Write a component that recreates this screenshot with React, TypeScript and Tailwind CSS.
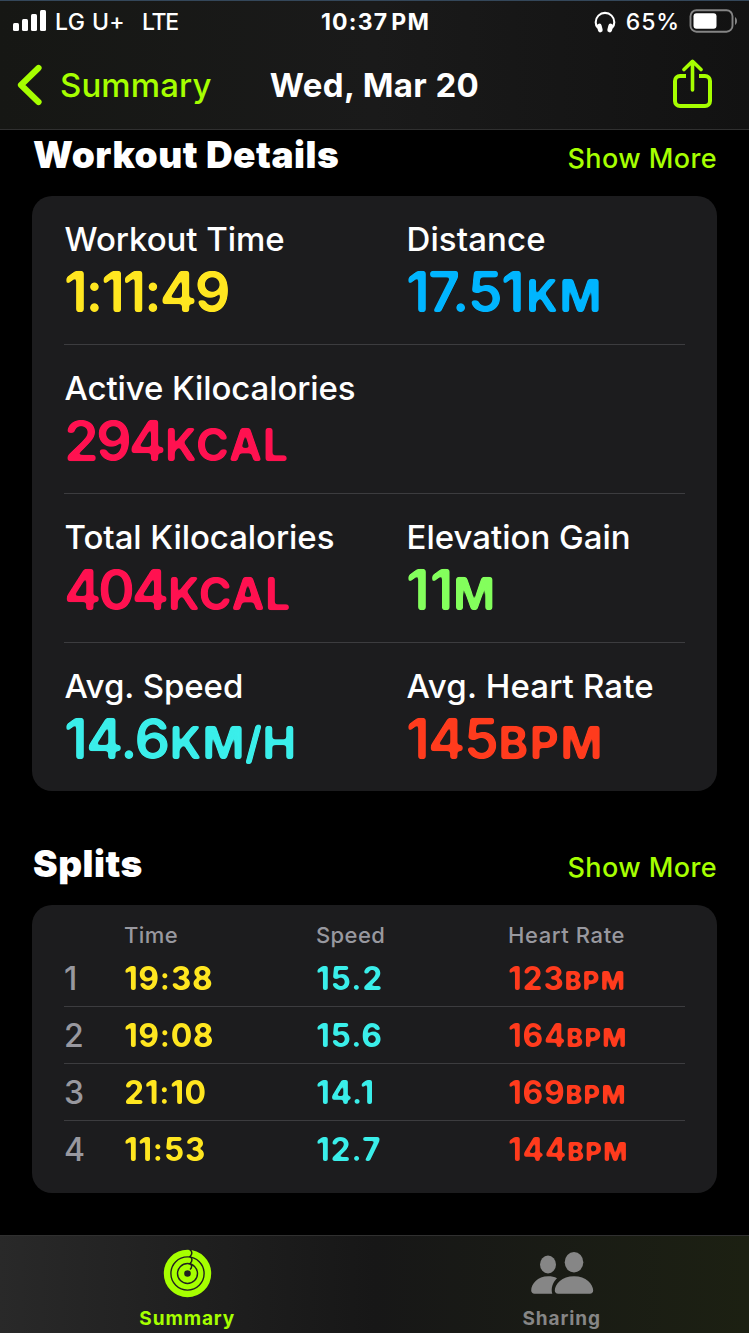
import { ReactNode } from "react";
import clsx from "clsx";

interface Metric {
  label: string;
  value: string;
  unit?: string;
  color: string;
  tracking: string;
  labelTracking: string;
  unitTracking?: string;
}

interface Split {
  time: string;
  speed: string;
  heartRate: string;
}

const metricRows: Metric[][] = [
  [
    { label: "Workout Time", value: "1:11:49", color: "text-[#ffe620]", tracking: "tracking-[-2.2px]", labelTracking: "tracking-[-0.05px]" },
    { label: "Distance", value: "17.51", unit: "KM", color: "text-[#00b5ff]", tracking: "tracking-[-1.6px]", labelTracking: "tracking-[0.1px]", unitTracking: "ml-[3px] tracking-[1px]" },
  ],
  [
    { label: "Active Kilocalories", value: "294", unit: "KCAL", color: "text-[#ff1150]", tracking: "tracking-[-3px]", labelTracking: "tracking-[-0.1px]", unitTracking: "ml-0.5 tracking-[0.5px]" },
  ],
  [
    { label: "Total Kilocalories", value: "404", unit: "KCAL", color: "text-[#ff1150]", tracking: "tracking-[-3.2px]", labelTracking: "tracking-[-0.05px]", unitTracking: "ml-0.5 tracking-[0.3px]" },
    { label: "Elevation Gain", value: "11", unit: "M", color: "text-[#83ff5c]", tracking: "tracking-[0px]", labelTracking: "tracking-[0px]" },
  ],
  [
    { label: "Avg. Speed", value: "14.6", unit: "KM/H", color: "text-[#3aeeea]", tracking: "tracking-[-1.6px]", labelTracking: "tracking-[-0.05px]", unitTracking: "ml-px tracking-[0.3px]" },
    { label: "Avg. Heart Rate", value: "145", unit: "BPM", color: "text-[#ff3b1d]", tracking: "tracking-[-1.6px]", labelTracking: "tracking-[0.15px]", unitTracking: "ml-px tracking-[1.6px]" },
  ],
];

const splits: Split[] = [
  { time: "19:38", speed: "15.2", heartRate: "123" },
  { time: "19:08", speed: "15.6", heartRate: "164" },
  { time: "21:10", speed: "14.1", heartRate: "169" },
  { time: "11:53", speed: "12.7", heartRate: "144" },
];

// Softens the corners of the numerals so they read as a rounded typeface
function RoundedFilters() {
  return (
    <svg width="0" height="0" className="absolute" aria-hidden="true">
      <filter id="round-lg" colorInterpolationFilters="sRGB" x="-5%" y="-10%" width="110%" height="120%">
        <feGaussianBlur stdDeviation="1.6" />
        <feColorMatrix values="1 0 0 0 0  0 1 0 0 0  0 0 1 0 0  0 0 0 4.5 -1.6" />
      </filter>
      <filter id="round-sm" colorInterpolationFilters="sRGB" x="-5%" y="-10%" width="110%" height="120%">
        <feGaussianBlur stdDeviation="1" />
        <feColorMatrix values="1 0 0 0 0  0 1 0 0 0  0 0 1 0 0  0 0 0 3.2 -1.1" />
      </filter>
    </svg>
  );
}

function StatusBar() {
  return (
    <div className="flex h-[42px] items-center pl-[13px] pr-[11px] text-[23px] leading-[42px] font-medium">
      <div className="flex w-[265px] items-center">
        <svg width="34" height="22" viewBox="0 0 34 22" fill="#fff" className="mr-2 mb-0.5">
          <rect x="0" y="13" width="6" height="8" rx="1.5" />
          <rect x="9" y="9" width="6" height="12" rx="1.5" />
          <rect x="18" y="4" width="6" height="17" rx="1.5" />
          <rect x="27" y="0" width="6" height="21" rx="1.5" />
        </svg>
        <span className="tracking-[0.4px]">LG U+</span>
        <span className="ml-[17px] tracking-[-1.3px]">LTE</span>
      </div>
      <div className="flex-1 text-center font-bold tracking-[1.2px]">10:37<span className="ml-[3px]">PM</span></div>
      <div className="flex w-[265px] items-center justify-end">
        <svg width="22" height="22" viewBox="0 0 22 22" fill="none" className="mr-2.5">
          <path d="M4 17C2.300 15.500 1.700 13.400 1.700 11.200a9.300 9.300 0 0 1 18.600 0c0 2.200-.6 4.300-2.300 5.800" stroke="#fff" strokeWidth="2.100" />
          <rect x="3.400" y="12.600" width="4.800" height="8.800" rx="2.300" fill="#fff" transform="rotate(-14 5.800 17)" />
          <rect x="13.800" y="12.600" width="4.800" height="8.800" rx="2.300" fill="#fff" transform="rotate(14 16.200 17)" />
        </svg>
        <span className="tracking-[0.9px]">65%</span>
        <svg width="49" height="24" viewBox="0 0 49 24" className="mb-[3px] ml-[9px]">
          <rect x="1.500" y="1.200" width="42" height="21.500" rx="6" fill="none" stroke="#858585" strokeWidth="1.900" />
          <rect x="4.500" y="4.300" width="23" height="15.500" rx="3" fill="#fff" />
          <path d="M46 8v8c1.400-.8 2-2.300 2-4s-.6-3.200-2-4z" fill="#858585" />
        </svg>
      </div>
    </div>
  );
}

function NavBar() {
  return (
    <div className="flex h-[84px] items-center pl-[17px] pr-9 text-[33px] leading-[84px]">
      <div className="flex w-[232px] items-center text-[#a6ff00]">
        <svg width="26" height="42" viewBox="0 0 26 42" fill="none">
          <path d="M21.500 4 4 21l17.500 17" stroke="currentColor" strokeWidth="6.200" strokeLinecap="round" strokeLinejoin="round" />
        </svg>
        <span className="ml-[17px] font-medium tracking-[0.1px]">Summary</span>
      </div>
      <div className="flex-1 text-center font-bold tracking-[0.4px]">Wed, Mar 20</div>
      <div className="flex w-[213px] justify-end">
        <svg width="41" height="50" viewBox="0 0 41 50" fill="none" stroke="#a6ff00" strokeWidth="4" strokeLinecap="round" strokeLinejoin="round" className="mb-[2px]">
          <path d="M14 17H8a5 5 0 0 0-5 5v20a5 5 0 0 0 5 5h25a5 5 0 0 0 5-5V22a5 5 0 0 0-5-5h-6" strokeLinecap="butt" />
          <path d="M20.500 4v27M12 10.500 20.500 2.300 29 10.500" strokeWidth="3.600" />
        </svg>
      </div>
    </div>
  );
}

function SectionHeader({ title }: { title: string }) {
  return (
    <div className="flex h-[58px] items-start justify-between pl-px">
      <h2 className="text-[37px] leading-[43px] font-black tracking-[0.5px]">{title}</h2>
      <button className="text-[27px] leading-[51px] font-medium tracking-[0.4px] text-[#a6ff00]">Show More</button>
    </div>
  );
}

function Card({ children }: { children: ReactNode }) {
  return <div className="rounded-[20px] bg-[#1c1c1e] px-8">{children}</div>;
}

function MetricCell({ metric }: { metric: Metric }) {
  return (
    <div className="w-[342px] shrink-0 whitespace-nowrap">
      <div className={clsx("pl-[0.5px] text-[33px] leading-[39px] font-medium", metric.labelTracking)}>{metric.label}</div>
      <div className={clsx("mt-[5px] text-[56px] leading-14 font-semibold [filter:url(#round-lg)]", metric.color, metric.tracking)}>
        {metric.value}
        {metric.unit && <span className={clsx("text-[45px] leading-none font-bold", metric.unitTracking)}>{metric.unit}</span>}
      </div>
    </div>
  );
}

function WorkoutDetails() {
  return (
    <Card>
      {metricRows.map((row, i) => (
        <div key={i} className={clsx("flex pt-6", i > 0 ? "h-[149px] border-t border-[#3c3c3f]" : "h-[148px]")}>
          {row.map((metric) => (
            <MetricCell key={metric.label} metric={metric} />
          ))}
        </div>
      ))}
    </Card>
  );
}

function Splits() {
  return (
    <Card>
      <div className="flex h-11 items-end pl-[60px] text-[22px] leading-7 font-medium tracking-[0.4px] text-[#98989f]">
        <div className="w-48">Time</div>
        <div className="w-48">Speed</div>
        <div className="tracking-[0.6px]">Heart Rate</div>
      </div>
      <div className="pb-4">
        {splits.map((split, i) => (
          <div
            key={split.time}
            className={clsx("flex h-[57px] items-center border-t text-[32px] leading-[57px] font-bold", i > 0 ? "border-[#3c3c3f]" : "border-transparent")}
          >
            <div className="w-[60px] font-medium text-[#98989f]">{i + 1}</div>
            <div className="w-48 tracking-[0.5px] text-[#ffe620] [filter:url(#round-sm)]">{split.time}</div>
            <div className="w-48 tracking-[0.7px] text-[#3aeeea] [filter:url(#round-sm)]">{split.speed}</div>
            <div className="tracking-[0.7px] text-[#ff3b1d] [filter:url(#round-sm)]">
              {split.heartRate}
              <span className="text-[25.500px] leading-none font-extrabold tracking-[1.2px]">BPM</span>
            </div>
          </div>
        ))}
      </div>
    </Card>
  );
}

function TabBar() {
  return (
    <div className="flex h-[98px] border-t border-[#303030] bg-linear-to-r from-[#292929] via-[#171717] to-[#1c2012] text-[19px] leading-6 font-bold tracking-[0.9px]">
      <div className="flex w-1/2 flex-col items-center pt-[13px] text-[#a6ff00]">
        <svg width="50" height="50" viewBox="0 0 50 50" fill="none">
          <circle cx="25.500" cy="24.500" r="20.500" stroke="currentColor" strokeWidth="6.400" />
          <circle cx="25.500" cy="24.500" r="13.300" stroke="currentColor" strokeWidth="5.200" />
          <circle cx="25.500" cy="24.500" r="6.300" stroke="currentColor" strokeWidth="6" />
          <path d="M27.500.3c3 1.700 3 5.200.5 7.200 2.600 1.500 2.600 5 0 7 2.300 1.500 2 4.500 0 6" stroke="#1c1d18" strokeWidth="1.500" />
        </svg>
        <span className="mt-2">Summary</span>
      </div>
      <div className="flex w-1/2 flex-col items-center pt-3.5 text-[#868686]">
        <svg width="64" height="50" viewBox="0 0 64 50" fill="currentColor">
          <ellipse cx="18" cy="14.500" rx="8" ry="9" />
          <ellipse cx="44" cy="12.300" rx="9.300" ry="10.200" />
          <path d="M27 28.200C24.500 26.800 21.500 26.200 18.200 26.200 7.500 26.200 1.200 34 1.200 40.500c0 2 1.300 3.200 3.300 3.200h17.800c-1.600-5 .2-11 4.700-15.500z" />
          <path d="M44 26.200c-12 0-19.200 8-19.200 14.300 0 2 1.200 3.200 3.300 3.200h31.800c2.100 0 3.300-1.200 3.300-3.200 0-6.300-7.200-14.300-19.200-14.300z" />
        </svg>
        <span className="mt-[7px]">Sharing</span>
      </div>
    </div>
  );
}

export default function App() {
  return (
    <div className="flex h-[1333px] w-[749px] flex-col overflow-hidden bg-black font-['Inter',sans-serif] text-white">
      <RoundedFilters />
      <div className="h-[130px] border-t border-b border-t-[#34475a] border-b-[#303030] bg-linear-to-r from-[#161714] via-[#1a1a1a] to-[#121212]">
        <StatusBar />
        <NavBar />
      </div>
      <div className="flex-1 px-8 pt-[3px]">
        <div className="h-[63px]">
          <SectionHeader title="Workout Details" />
        </div>
        <WorkoutDetails />
        <div className="h-[114px] pt-[51px]">
          <SectionHeader title="Splits" />
        </div>
        <Splits />
      </div>
      <TabBar />
    </div>
  );
}
